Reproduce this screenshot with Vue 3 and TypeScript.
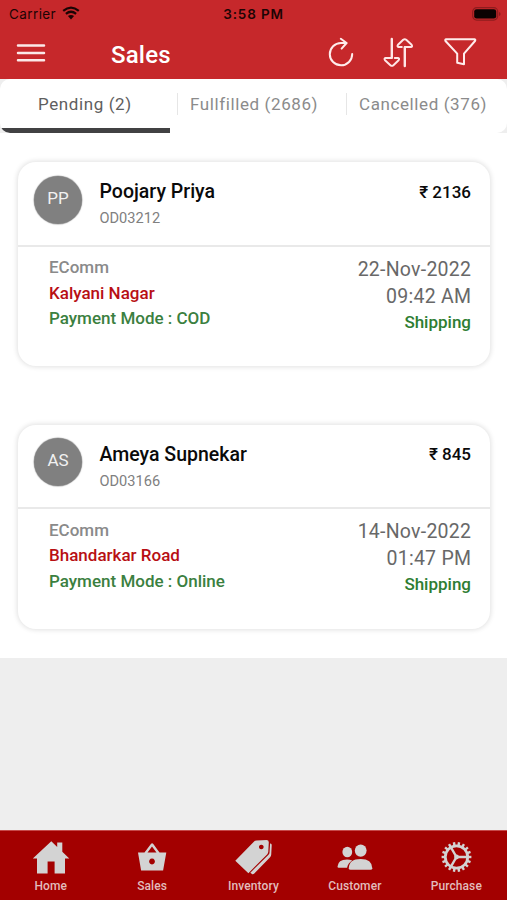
<script setup lang="ts">
interface Tab {
  label: string
  cls: string
}

interface Order {
  initials: string
  name: string
  code: string
  amount: string
  area: string
  payment: string
  date: string
  time: string
}

const tabs: Tab[] = [
  { label: 'Pending (2)', cls: 'tab first active' },
  { label: 'Fullfilled (2686)', cls: 'tab' },
  { label: 'Cancelled (376)', cls: 'tab last' },
]

const orders: Order[] = [
  { initials: 'PP', name: 'Poojary Priya', code: 'OD03212', amount: '2136', area: 'Kalyani Nagar', payment: 'COD', date: '22-Nov-2022', time: '09:42 AM' },
  { initials: 'AS', name: 'Ameya Supnekar', code: 'OD03166', amount: '845', area: 'Bhandarkar Road', payment: 'Online', date: '14-Nov-2022', time: '01:47 PM' },
]

const teeth: number[] = Array.from({ length: 18 }, (_, i) => i * 20)
</script>

<template>
  <div class="screen">
    <header class="top">
      <div class="status">
        <div class="carrier">
          <span>Carrier</span>
          <svg class="wifi" width="18" height="14" viewBox="0 0 18 14">
            <path d="M1.2 4.9Q9-1.6 16.8 4.9M3.9 7.8Q9 3.7 14.1 7.8" fill="none" stroke="#1c0404" stroke-width="2.2" />
            <path d="M9 13.4L5.9 10.1Q9 7.7 12.1 10.1Z" fill="#1c0404" />
          </svg>
        </div>
        <span class="clock">3:58 PM</span>
        <div class="battery-box">
          <svg width="29" height="14" viewBox="0 0 29 14">
            <rect x=".7" y=".7" width="25" height="12.4" rx="4" fill="none" stroke="#8f1c1e" stroke-width="1.2" />
            <rect x="2.2" y="2.2" width="22" height="9.4" rx="2.4" fill="#0b0202" />
            <path d="M27 5v4q1.6-.6 1.6-2T27 5Z" fill="#8f1c1e" />
          </svg>
        </div>
      </div>
      <div class="bar">
        <svg class="menu" width="30" height="20" viewBox="0 0 30 20">
          <path d="M2 2.5h26M2 10h26M2 17.3h26" stroke="#fbe9e9" stroke-width="2.5" stroke-linecap="round" />
        </svg>
        <h1>Sales</h1>
        <div class="actions">
          <svg width="28" height="34" viewBox="327 36 28 34" fill="none" stroke="#ffecec" stroke-width="2" stroke-linecap="round" stroke-linejoin="round">
            <path d="M352.2 54A11.2 11.2 0 1 1 341 42.9H346.3" />
            <path d="M340.8 38.8L346.6 43L341.6 48.6" />
          </svg>
          <svg width="34" height="34" viewBox="382 36 34 34" fill="none" stroke="#ffe6e6" stroke-width="2" stroke-linecap="round" stroke-linejoin="round">
            <path class="stem" d="M391.8 39V57.5M404.8 66V47.5" />
            <path d="M391.8 58H385.6Q383.8 58.6 385 60.2L390.4 65.2Q391.9 66.4 393.4 65.2L398.6 60.2Q399.8 58.4 398 58H394.8" />
            <path d="M404.8 47H411Q412.8 46.4 411.6 44.8L406.2 39.8Q404.7 38.6 403.2 39.8L398 44.8Q396.8 46.6 398.6 47H401.8" />
          </svg>
          <svg width="34" height="34" viewBox="443 36 34 34" fill="none" stroke="#ffecec" stroke-width="2" stroke-linejoin="round">
            <path d="M446 39.2H474.6Q475.8 39.4 475 41L464 53.6V64.2L457.2 62.8V53.6L445.5 41Q444.8 39.5 446 39.2Z" />
          </svg>
        </div>
      </div>
    </header>

    <nav class="tabs">
      <div v-for="t in tabs" :key="t.label" :class="t.cls"><span>{{ t.label }}</span></div>
    </nav>

    <main class="orders">
      <article v-for="o in orders" :key="o.code" class="card">
        <div class="head">
          <div class="avatar">{{ o.initials }}</div>
          <div class="who">
            <div class="name">{{ o.name }}</div>
            <div class="code">{{ o.code }}</div>
          </div>
          <div class="amount">₹ {{ o.amount }}</div>
        </div>
        <div class="body">
          <div class="left">
            <div class="channel">EComm</div>
            <div class="area">{{ o.area }}</div>
            <div class="pay">Payment Mode : {{ o.payment }}</div>
          </div>
          <div class="right">
            <div class="date">{{ o.date }}</div>
            <div class="date">{{ o.time }}</div>
            <div class="ship">Shipping</div>
          </div>
        </div>
      </article>
    </main>

    <footer class="nav">
      <div class="item">
        <svg width="40" height="38" viewBox="31 838 40 38" fill="#d3d3d3">
          <path d="M51.3 841.2L57.2 846.9V842.4H62.3V851.7L69.3 858.5H65V873.4H54.6V861.6H47.6V873.4H37V858.5H32.8Z" />
        </svg>
        <span>Home</span>
      </div>
      <div class="item">
        <svg width="40" height="38" viewBox="132.5 838 40 38" fill="#d3d3d3">
          <path fill-rule="evenodd" d="M138.5 852.4H145L151.4 844Q152.6 842.6 153.8 844L160 852.4H166.8L163.6 870.6H141.6ZM148 852.4H157L152.5 846.6ZM152.5 858.6a2.9 2.9 0 1 0 .01 0Z" />
        </svg>
        <span>Sales</span>
      </div>
      <div class="item">
        <svg width="40" height="38" viewBox="233.5 838 40 38" fill="#d3d3d3">
          <path fill-rule="evenodd" d="M235.8 860.8L254.6 841.6Q255.6 840.6 257 840.5L267 840Q269.3 840 269.3 842.3L268.8 851.8Q268.7 853.2 267.8 854.2L248.9 873.2ZM261.8 844.7a2.3 2.3 0 1 0 .01 0Z" />
          <path d="M270.6 843.5H271Q272.4 843.7 272.2 845.5L271.7 854.8Q271.6 856.2 270.6 857.3L254.8 873.6Q253.4 875 252.2 873.8L250.8 872.7L269 854.8Q270 853.8 270 852.8Z" />
        </svg>
        <span>Inventory</span>
      </div>
      <div class="item">
        <svg width="40" height="38" viewBox="335.5 838 40 38" fill="#d3d3d3">
          <ellipse cx="347.8" cy="852" rx="4.9" ry="5.3" />
          <ellipse cx="361.2" cy="850.6" rx="5.9" ry="6.2" />
          <path d="M349.3 868.2Q349.5 859 361.2 859Q372.5 859 372.8 868.2Q372.8 869.8 371 869.8H351Q349.3 869.8 349.3 868.2Z" />
          <path d="M338 866.6Q338.5 859.5 347.5 859.5Q350 859.5 352.8 860.4Q348.2 863 347.6 867.8H339.2Q338 867.8 338 866.6Z" />
        </svg>
        <span>Customer</span>
      </div>
      <div class="item">
        <svg width="40" height="38" viewBox="436.5 838 40 38" fill="none" stroke="#d3d3d3">
          <g transform="translate(457 857)">
            <circle r="11.2" stroke-width="2.7" />
            <path v-for="a in teeth" :key="a" d="M0-11.5V-14.9" stroke-width="2.4" :transform="`rotate(${a + 10})`" />
            <path d="M0 0H11M0 0L-5.6 9.7M0 0L-5.6-9.7" stroke-width="2.4" />
            <circle r="2.4" fill="#d3d3d3" stroke="none" />
          </g>
        </svg>
        <span>Purchase</span>
      </div>
    </footer>
  </div>
</template>

<style>
body {
  margin: 0;
}
</style>

<style scoped>
.screen {
  width: 507px;
  height: 900px;
  display: flex;
  flex-direction: column;
  overflow: hidden;
  background: #eeeeee;
  font-family: Roboto, 'Liberation Sans', sans-serif;
}
.top {
  height: 79px;
  flex: none;
  background: #c6282b;
}
.status {
  height: 27px;
  padding: 0 6px 0 9px;
  display: grid;
  grid-template-columns: 1fr auto 1fr;
  align-items: center;
  color: #1c0404;
  font: 400 13.5px Inter, sans-serif;
}
.carrier {
  display: flex;
  align-items: center;
  gap: 6px;
  letter-spacing: 0.4px;
}
.wifi {
  margin-top: -1px;
}
.clock {
  font-weight: 600;
  letter-spacing: 0.85px;
  margin-right: 3px;
}
.battery-box {
  display: flex;
  justify-content: flex-end;
}
.bar {
  height: 52px;
  display: flex;
  align-items: center;
  padding: 0 30px 0 16px;
}
.menu {
  margin-bottom: 1px;
}
h1 {
  margin: 3px 0 0 65px;
  flex: 1;
  color: #fff;
  font-size: 24px;
  line-height: 28px;
  font-weight: 500;
  letter-spacing: 0.2px;
}
.actions {
  display: flex;
  gap: 27px;
}
.stem {
  stroke-width: 2.4;
}
.tabs {
  height: 54px;
  flex: none;
  display: grid;
  grid-template-columns: 170px 169px 168px;
  background: #fff;
  border-radius: 10px;
  overflow: hidden;
}
.tab {
  box-sizing: border-box;
  height: 54px;
  padding: 14px 0 0 7px;
  font-size: 17px;
  line-height: 22px;
  letter-spacing: 0.6px;
  color: #8b8b8b;
  white-space: nowrap;
}
.tab span {
  display: inline-block;
  padding-left: 12px;
  border-left: 1px solid #e6e6e6;
}
.first {
  padding-left: 38px;
}
.first span {
  padding-left: 0;
  border-left: 0;
}
.active {
  color: #5e5e5e;
  border-bottom: 5px solid #414143;
}
.orders {
  height: 525px;
  box-sizing: border-box;
  flex: none;
  padding: 29px 17px 0 18px;
  display: flex;
  flex-direction: column;
  gap: 58.5px;
  background: #fff;
}
.card {
  height: 204px;
  flex: none;
  border-radius: 18px;
  background: #fff;
  box-shadow: 0 0 5px 1px rgba(0, 0, 0, 0.12);
}
.head {
  box-sizing: border-box;
  height: 84.5px;
  padding: 13.5px 19px 0 16px;
  display: flex;
  border-bottom: 2px solid #e9e9e9;
}
.avatar {
  width: 48px;
  height: 48px;
  border-radius: 50%;
  background: #808080;
  box-shadow: 0 0 1px 0.5px #a8a8a8;
  color: #f1f1f1;
  font-size: 17px;
  line-height: 45px;
  text-align: center;
}
.who {
  flex: 1;
  padding: 4.5px 0 0 17.5px;
}
.name {
  font-size: 19.5px;
  line-height: 24px;
  font-weight: 500;
  color: #0a0a0a;
}
.code {
  margin-top: 6px;
  font-size: 14.6px;
  line-height: 17px;
  color: #808080;
}
.amount {
  padding-top: 5px;
  font-size: 17px;
  line-height: 22px;
  font-weight: 500;
  color: #0a0a0a;
}
.body {
  display: flex;
  justify-content: space-between;
  padding: 9px 19px 0 31px;
}
.left {
  font-size: 17px;
  line-height: 25.6px;
  font-weight: 500;
  margin-top: -0.5px;
}
.channel {
  color: #8a8a8a;
}
.area {
  color: #b80f14;
}
.pay {
  color: #3b8040;
}
.right {
  text-align: right;
}
.date {
  font-size: 19.5px;
  line-height: 27px;
  letter-spacing: 0.25px;
  margin-right: -0.25px;
  color: #686868;
}
.ship {
  font-size: 17px;
  line-height: 24px;
  font-weight: 500;
  color: #2e7d32;
}
.nav {
  margin-top: auto;
  height: 70px;
  box-sizing: border-box;
  border-top: 1px solid #c64a4a;
  display: grid;
  grid-template-columns: repeat(5, 1fr);
  background: #a30000;
}
.item {
  display: flex;
  flex-direction: column;
  align-items: center;
  padding-top: 7px;
}
.item span {
  margin-top: 3px;
  font-size: 12px;
  line-height: 14px;
  font-weight: 500;
  letter-spacing: 0.1px;
  color: #e2bcbc;
}
</style>
